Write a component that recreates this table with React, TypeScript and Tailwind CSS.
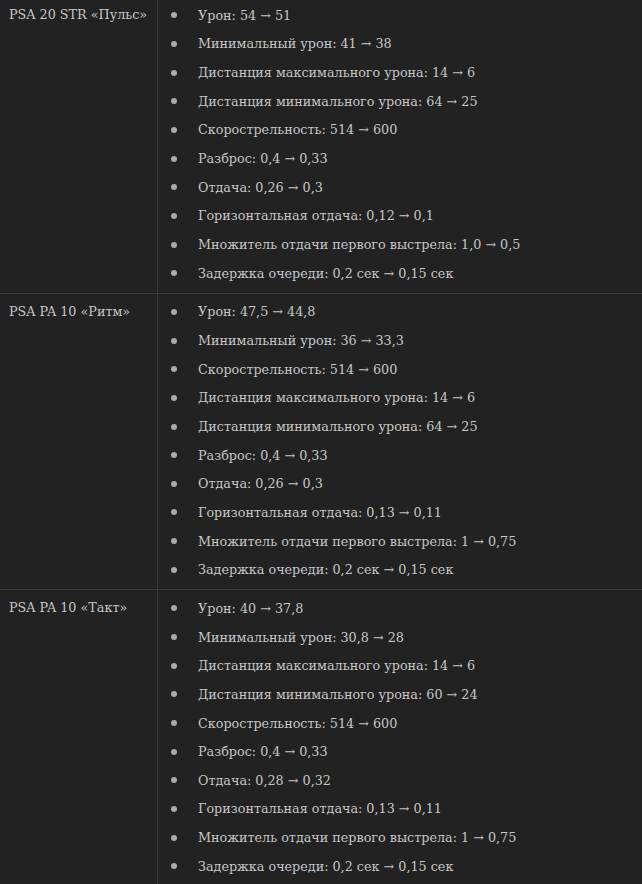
import React from "react";

const rows: { name: string; items: string[] }[] = [
  {
    name: "PSA 20 STR «Пульс»",
    items: [
      "Урон: 54 → 51",
      "Минимальный урон: 41 → 38",
      "Дистанция максимального урона: 14 → 6",
      "Дистанция минимального урона: 64 → 25",
      "Скорострельность: 514 → 600",
      "Разброс: 0,4 → 0,33",
      "Отдача: 0,26 → 0,3",
      "Горизонтальная отдача: 0,12 → 0,1",
      "Множитель отдачи первого выстрела: 1,0 → 0,5",
      "Задержка очереди: 0,2 сек → 0,15 сек",
    ],
  },
  {
    name: "PSA PA 10 «Ритм»",
    items: [
      "Урон: 47,5 → 44,8",
      "Минимальный урон: 36 → 33,3",
      "Скорострельность: 514 → 600",
      "Дистанция максимального урона: 14 → 6",
      "Дистанция минимального урона: 64 → 25",
      "Разброс: 0,4 → 0,33",
      "Отдача: 0,26 → 0,3",
      "Горизонтальная отдача: 0,13 → 0,11",
      "Множитель отдачи первого выстрела: 1 → 0,75",
      "Задержка очереди: 0,2 сек → 0,15 сек",
    ],
  },
  {
    name: "PSA PA 10 «Такт»",
    items: [
      "Урон: 40 → 37,8",
      "Минимальный урон: 30,8 → 28",
      "Дистанция максимального урона: 14 → 6",
      "Дистанция минимального урона: 60 → 24",
      "Скорострельность: 514 → 600",
      "Разброс: 0,4 → 0,33",
      "Отдача: 0,28 → 0,32",
      "Горизонтальная отдача: 0,13 → 0,11",
      "Множитель отдачи первого выстрела: 1 → 0,75",
      "Задержка очереди: 0,2 сек → 0,15 сек",
    ],
  },
];

export default function App() {
  return (
    <div
      className="w-[642px] h-[884px] overflow-hidden bg-[#222222] text-[#c6c6c6] text-[12.75px]"
      style={{ fontFamily: '"DejaVu Serif", serif' }}
    >
      <div className="-mt-[3px] flex flex-col">
        {rows.map((r, i) => (
          <div
            key={i}
            className={`flex ${i > 0 ? "border-t border-[#3a3a3a]" : ""}`}
          >
            <div className="w-[158px] shrink-0 border-r border-[#3a3a3a] pl-[9px] pt-[4px] leading-[28.67px]">
              {r.name}
            </div>
            <ul className="flex flex-col pt-[4px] pb-[5px]">
              {r.items.map((t, j) => (
                <li key={j} className="flex items-center h-[28.67px]">
                  <span className="w-[40px] flex justify-start pl-[13px]">
                    <span className="w-[6px] h-[6px] rounded-full bg-[#aaaaaa]" />
                  </span>
                  <span className="whitespace-nowrap">{t}</span>
                </li>
              ))}
            </ul>
          </div>
        ))}
      </div>
    </div>
  );
}
